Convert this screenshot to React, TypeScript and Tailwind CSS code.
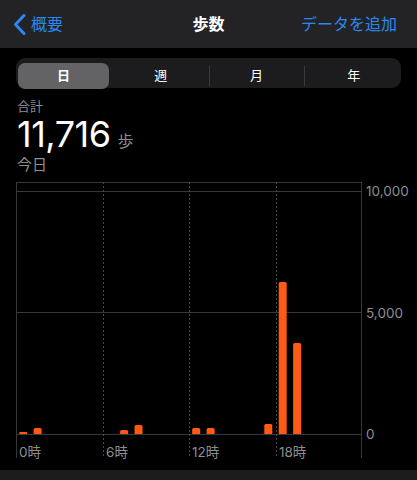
import React from "react";

const BLUE = "#2a88ee";

const bars = [
  { hour: 0, h: 2 },
  { hour: 1, h: 6 },
  { hour: 7, h: 4 },
  { hour: 8, h: 9 },
  { hour: 12, h: 6 },
  { hour: 13, h: 6 },
  { hour: 17, h: 10 },
  { hour: 18, h: 152 },
  { hour: 19, h: 91 },
];

const StepsChart: React.FC = () => {
  const left = 16;
  const right = 362;
  const step = (right - left) / 24;
  const base = 252;
  return (
    <svg width={417} height={288} viewBox="0 0 417 288" className="block">
      {/* frame + grid */}
      <line x1={left} y1={0.5} x2={right} y2={0.5} stroke="#38383a" strokeWidth={1} />
      <line x1={left} y1={9.5} x2={right} y2={9.5} stroke="#38383a" strokeWidth={1} />
      <line x1={left} y1={130.5} x2={right} y2={130.5} stroke="#38383a" strokeWidth={1} />
      <line x1={left} y1={base + 0.5} x2={right} y2={base + 0.5} stroke="#3a3a3c" strokeWidth={1} />
      <line x1={left + 0.5} y1={0} x2={left + 0.5} y2={276} stroke="#38383a" strokeWidth={1} />
      <line x1={right - 0.5} y1={0} x2={right - 0.5} y2={276} stroke="#38383a" strokeWidth={1} />
      {[6, 12, 18].map((h) => {
        const x = Math.round(left + step * h) + 0.5;
        return (
          <line key={h} x1={x} y1={0} x2={x} y2={276} stroke="#4a4a4c" strokeWidth={1} strokeDasharray="2 2" />
        );
      })}

      {/* bars */}
      {bars.map((b) => {
        const cx = left + step * (b.hour + 0.5);
        const x = cx - 4;
        const y = base - b.h;
        const r = Math.min(1.5, b.h / 2);
        const d = `M${x} ${base} V${y + r} Q${x} ${y} ${x + r} ${y} H${x + 8 - r} Q${x + 8} ${y} ${x + 8} ${y + r} V${base} Z`;
        return <path key={b.hour} d={d} fill="#ff5a14" />;
      })}

      {/* y labels */}
      <g fill="#8d8d92" fontSize={13.5} fontFamily="Inter, 'Noto Sans CJK JP', sans-serif">
        <text x={366} y={13.5}>10,000</text>
        <text x={366} y={135.5}>5,000</text>
        <text x={366} y={257}>0</text>
      </g>
      {/* x labels */}
      <g fill="#8d8d92" fontSize={13.5} fontFamily="Inter, 'Noto Sans CJK JP', sans-serif">
        {[0, 6, 12, 18].map((h) => (
          <text key={h} x={Math.round(left + step * h) + 3} y={275}>
            {h}時
          </text>
        ))}
      </g>
    </svg>
  );
};

const App: React.FC = () => {
  return (
    <div
      className="w-[417px] h-[480px] bg-black flex flex-col overflow-hidden"
      style={{ fontFamily: "Inter, 'Noto Sans CJK JP', sans-serif" }}
    >
      {/* nav bar */}
      <div className="h-12 bg-[#232325] grid grid-cols-3 items-center shrink-0">
        <div className="flex items-center gap-[5px] pl-[13px]">
          <svg width={13} height={21} viewBox="0 0 13 21" fill="none">
            <path d="M11 1.5L2.5 10.5L11 19.5" stroke={BLUE} strokeWidth={3} strokeLinecap="round" strokeLinejoin="round" />
          </svg>
          <span className="text-[16px] leading-5" style={{ color: BLUE }}>
            概要
          </span>
        </div>
        <div className="text-center text-white text-[16px] font-semibold leading-5">歩数</div>
        <div className="text-right pr-[20px] text-[16px] leading-5 whitespace-nowrap" style={{ color: BLUE }}>
          データを追加
        </div>
      </div>

      {/* segmented control */}
      <div className="mx-4 mt-[10px] h-[30px] rounded-[9px] bg-[#1c1c1e] p-[2px] grid grid-cols-4 shrink-0">
        <div className="flex items-center justify-start">
          <div className="w-[91px] h-[26px] rounded-[7px] bg-[#636366] flex items-center justify-center text-white text-[13px] font-semibold">
            日
          </div>
        </div>
        <div className="flex items-center justify-center text-white text-[13px]">週</div>
        <div className="flex items-center justify-center text-white text-[13px] border-l border-[#3a3a3c] my-[6px]">
          月
        </div>
        <div className="flex items-center justify-center text-white text-[13px] border-l border-[#3a3a3c] my-[6px] pl-1">
          年
        </div>
      </div>

      {/* summary */}
      <div className="pl-[17px] mt-[10px] flex flex-col shrink-0">
        <div className="text-[13px] leading-4 text-[#8d8d92]">合計</div>
        <div className="flex items-baseline gap-[7px] h-10 overflow-visible">
          <span className="text-[36px] leading-[40px] text-white tracking-[-0.5px]">11,716</span>
          <span className="text-[16px] leading-none text-[#8d8d92]">歩</span>
        </div>
        <div className="text-[15px] leading-5 text-[#8d8d92] mt-[1px]">今日</div>
      </div>

      {/* chart */}
      <div className="mt-[7px] shrink-0">
        <StepsChart />
      </div>

      <div className="flex-1 bg-[#1c1c1e]" />
    </div>
  );
};

export default App;
